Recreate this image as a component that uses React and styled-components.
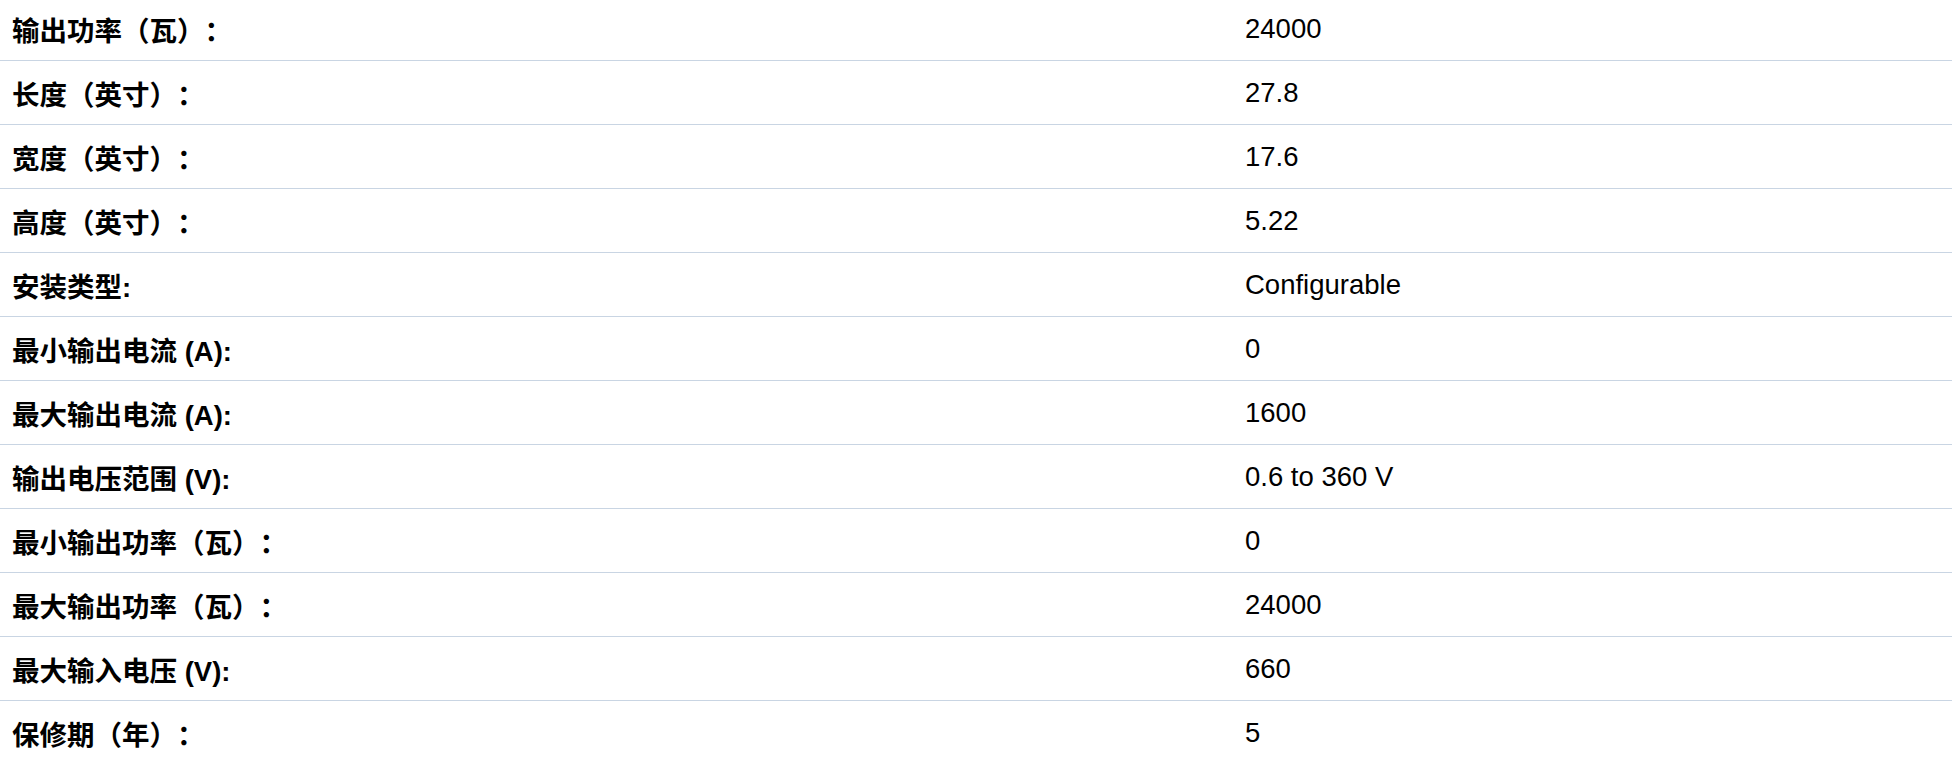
import styled, { createGlobalStyle } from "styled-components";

const GlobalStyle = createGlobalStyle`
  html, body {
    margin: 0;
    padding: 0;
    background: #fff;
  }
  body {
    font-family: "Liberation Sans", Arial, "Noto Sans CJK SC", sans-serif;
    color: #000;
  }
`

const Table = styled.div`
  display: flex;
  flex-direction: column;
  margin-top: -3px;
`

const Row = styled.div`
  display: grid;
  grid-template-columns: 1233px 1fr;
  align-items: center;
  height: 63px;
  border-bottom: ${props => props.last ? "none" : "1px solid #c9d5e3"};
`

const Label = styled.div`
  padding: 0 12px;
  font-size: 27.5px;
  font-weight: bold;
  font-family: "Liberation Sans", Arial, "Noto Sans CJK SC", sans-serif;
  text-spacing-trim: space-all;
  white-space: nowrap;
`

const Value = styled.div`
  padding: 0 12px;
  font-size: 27.5px;
  font-family: "Liberation Sans", Arial, "Noto Sans CJK SC", sans-serif;
  white-space: nowrap;
`

const specs = [
  ["输出功率（瓦）：", "24000"],
  ["长度（英寸）：", "27.8"],
  ["宽度（英寸）：", "17.6"],
  ["高度（英寸）：", "5.22"],
  ["安装类型:", "Configurable"],
  ["最小输出电流 (A):", "0"],
  ["最大输出电流 (A):", "1600"],
  ["输出电压范围 (V):", "0.6 to 360 V"],
  ["最小输出功率（瓦）：", "0"],
  ["最大输出功率（瓦）：", "24000"],
  ["最大输入电压 (V):", "660"],
  ["保修期（年）：", "5"],
]

export default function App() {
  return (
    <>
      <GlobalStyle />
      <Table>
        {specs.map(([label, value], i) => (
          <Row key={label + i} last={i === specs.length - 1}>
            <Label>{label}</Label>
            <Value>{value}</Value>
          </Row>
        ))}
      </Table>
    </>
  )
}
